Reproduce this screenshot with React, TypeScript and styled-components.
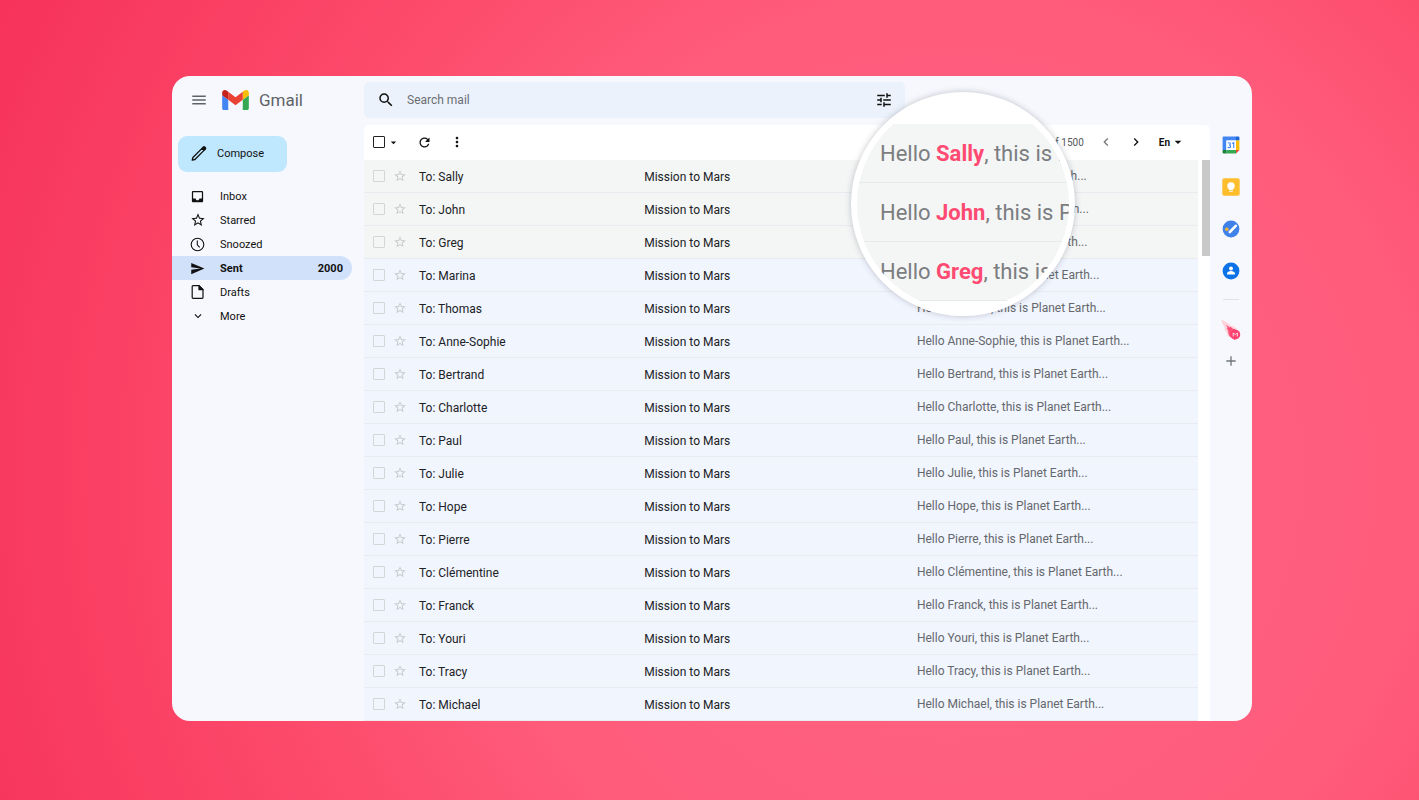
import React from 'react';
import styled, { createGlobalStyle } from 'styled-components';
import {
  MdMenu, MdSearch, MdTune, MdRefresh, MdMoreVert, MdInbox, MdStarBorder, MdSend,
  MdExpandMore, MdChevronLeft, MdChevronRight, MdAdd, MdArrowDropDown,
} from 'react-icons/md';

const GlobalStyle = createGlobalStyle`
  *, *::before, *::after { box-sizing: border-box; }
  body { margin: 0; font-family: Roboto, "Liberation Sans", sans-serif; font-size: 12px; color: #202124; }
  button, input, select { font: inherit; color: inherit; margin: 0; }
  button { border: 0; padding: 0; background: none; cursor: pointer; display: inline-flex; align-items: center; justify-content: center; }
  svg { display: block; flex: none; }
`;

const Stage = styled.div`
  min-height: 100vh;
  padding: 76px 167px 79px 172px;
  background: radial-gradient(ellipse 75% 133% at 67% 59%, #ff6584 0%, #ff5b7b 45%, #fd4d6d 62%, #fb4366 76%, #f6325a 100%);
`;

const Window = styled.div`
  position: relative;
  display: grid;
  grid-template-columns: 192px minmax(0, 1fr) 42px;
  grid-template-rows: 49px auto;
  background: #f7f8fd;
  border-radius: 18px;
  overflow: hidden;
`;

const Brand = styled.header`
  display: flex;
  align-items: center;
  padding: 0 0 2px 18px;
  color: #5f6368;
`;

const MenuButton = styled.button`
  width: 18px;
  height: 18px;
`;

const BrandLink = styled.a`
  display: flex;
  align-items: center;
  gap: 10px;
  margin-left: 14px;
  color: #5f6368;
  font-size: 17px;
  text-decoration: none;
`;

const SearchBar = styled.form`
  display: flex;
  align-items: center;
  align-self: start;
  width: 64%;
  height: 36px;
  margin-top: 6px;
  padding: 0 13px;
  gap: 12px;
  border-radius: 5px;
  background: #ebf2fb;
  color: #111;
`;

const SearchInput = styled.input`
  flex: 1;
  min-width: 0;
  border: 0;
  padding: 0;
  outline: 0;
  background: transparent;
  font-size: 12px;
  &::placeholder { color: #6b6f74; opacity: 1; }
`;

const Sidebar = styled.aside`
  grid-row: 2;
  grid-column: 1;
  padding-top: 11px;
`;

const Compose = styled.button`
  width: 109px;
  height: 36px;
  margin: 0 0 12px 6px;
  justify-content: flex-start;
  padding: 0 0 2px 13px;
  gap: 10px;
  border-radius: 9px;
  background: #bfe7fd;
  color: #111;
  font-size: 11px;
`;

const NavLink = styled.a<{ $active?: boolean }>`
  display: flex;
  align-items: center;
  height: 24px;
  margin-right: 12px;
  padding: 0 9px 0 18px;
  gap: 15px;
  border-radius: 0 12px 12px 0;
  background: ${p => (p.$active ? '#d2e1fa' : 'transparent')};
  font-size: 11px;
  font-weight: ${p => (p.$active ? 700 : 400)};
  color: #111;
  text-decoration: none;
`;

const IconSlot = styled.span`
  display: flex;
  justify-content: center;
  width: 15px;
`;

const Count = styled.span`
  margin-left: auto;
`;

const Panel = styled.main`
  grid-row: 2;
  grid-column: 2;
  background: #fff;
  border-radius: 5px 5px 0 0;
`;

const Toolbar = styled.div`
  display: flex;
  align-items: center;
  height: 35px;
  padding: 0 24px 1px 9px;
`;

const CheckBox = styled.input<{ $strong?: boolean }>`
  appearance: none;
  display: block;
  width: 12px;
  height: 12px;
  border: 1px solid ${p => (p.$strong ? '#222' : '#d3d5d6')};
  border-radius: 1px;
`;

const ToolButton = styled.button<{ $gap?: number; $dim?: boolean }>`
  width: 16px;
  height: 16px;
  margin-left: ${p => p.$gap ?? 0}px;
  color: ${p => (p.$dim ? '#777' : '#111')};
`;

const Range = styled.span`
  margin-left: auto;
  font-size: 10px;
  color: #55585c;
`;

const Language = styled.button`
  margin-left: 15px;
  font-size: 10px;
  font-weight: 700;
  color: #111;
`;

const Scroller = styled.div`
  display: grid;
  grid-template-columns: minmax(0, 1fr) 8px;
  gap: 4px;
  align-items: start;
`;

const ScrollThumb = styled.div`
  height: 96px;
  background: #c9c9c9;
`;

const MailTable = styled.table`
  width: 100%;
  table-layout: fixed;
  border-collapse: separate;
  border-spacing: 0;
`;

const MailRow = styled.tr<{ $sent?: boolean }>`
  background: ${p => (p.$sent ? '#f4f6f6' : '#f1f5fe')};
`;

const Cell = styled.td`
  height: 33px;
  padding: 2px 0 0;
  border-bottom: 1px solid #e8ebef;
  white-space: nowrap;
`;

const PreviewCell = styled(Cell)`
  padding: 0;
  color: #65686c;
`;

const CheckCell = styled(Cell)`
  padding: 0 0 0 9px;
`;

const StarCell = styled(Cell)`
  padding: 0;
`;

const StarButton = styled.button`
  display: flex;
  width: 14px;
  height: 14px;
  margin-left: -1px;
  color: #c8cacc;
`;

const Rail = styled.aside`
  grid-row: 2;
  grid-column: 3;
  display: flex;
  flex-direction: column;
  align-items: center;
  padding-top: 11px;
`;

const AppButton = styled.button`
  width: 18px;
  height: 18px;
  margin-bottom: 24px;
`;

const RailDivider = styled.hr`
  width: 16px;
  margin: -5px 0 19px;
  border: 0;
  border-top: 1px solid #dfe1e5;
`;

const RailSmall = styled.button`
  height: 22px;
  margin-bottom: 9px;
  color: #70757a;
`;

const Lens = styled.div`
  position: absolute;
  top: 16px;
  right: 177px;
  width: 224px;
  height: 224px;
  padding-top: 26px;
  border: 6px solid #fff;
  border-radius: 50%;
  overflow: hidden;
  background: #fff;
  box-shadow: 0 0 6px rgba(60, 64, 80, 0.3);
`;

const LensRow = styled.p`
  height: 59px;
  margin: 0;
  padding-left: 23px;
  border-bottom: 1px solid #e8ebeb;
  background: #f4f6f6;
  color: #7b7d80;
  font-size: 22px;
  line-height: 59px;
  white-space: nowrap;
`;

const Highlight = styled.strong`
  color: #ff4a72;
`;

const GmailLogo = () => (
  <svg width="27" height="20" viewBox="52 42 88 66" aria-hidden="true">
    <path fill="#4285f4" d="M58 108h14V74L52 59v43c0 3.32 2.69 6 6 6" />
    <path fill="#34a853" d="M120 108h14c3.32 0 6-2.69 6-6V59l-20 15" />
    <path fill="#fbbc04" d="M120 48v26l20-15v-8c0-7.42-8.47-11.65-14.4-7.2" />
    <path fill="#ea4335" d="M72 74V48l24 18 24-18v26L96 92" />
    <path fill="#c5221f" d="M52 51v8l20 15V48l-5.6-4.2c-5.94-4.45-14.4-.22-14.4 7.2" />
  </svg>
);

const Pencil = () => (
  <svg width="16" height="16" viewBox="0 0 16 16" fill="none" stroke="#111" strokeWidth="1.3" strokeLinejoin="round" aria-hidden="true">
    <path d="M1.200 15.200l.7-2.700L11 3.400l2 2-9.100 9.100z" />
    <path d="M11.400 3l1-1c.4-.4.8-.4 1.200 0l.8.8c.4.4.4.8 0 1.200l-1 1z" fill="#111" />
  </svg>
);

const Clock = () => (
  <svg width="15" height="15" viewBox="0 0 15 15" fill="none" stroke="#111" strokeWidth="1.1" aria-hidden="true">
    <circle cx="7.5" cy="7.5" r="6.3" />
    <path d="M7.3 3.6v4.200l2.400 2.600" />
  </svg>
);

const DraftPage = () => (
  <svg width="13" height="14" viewBox="0 0 13 14" fill="none" stroke="#111" strokeWidth="1.2" strokeLinejoin="round" aria-hidden="true">
    <path d="M2 .7h6l4 4v7.800c0 .5-.3.8-.8.8H2c-.5 0-.8-.3-.8-.8v-11c0-.5.3-.8.8-.8z" />
    <path d="M8 .7v4h4z" fill="#111" />
  </svg>
);

const Calendar = () => (
  <svg width="18" height="18" viewBox="0 0 18 18" aria-hidden="true">
    <path fill="#4285f4" d="M1.6.6H14v4H4.400v9.400H.6V1.600a1 1 0 0 1 1-1z" />
    <path fill="#1967d2" d="M14 .6h2.400a1 1 0 0 1 1 1v3H14z" />
    <path fill="#fbbc04" d="M14 4.600h3.400V14H14z" />
    <path fill="#34a853" d="M4.400 14H14v3.400H4.400z" />
    <path fill="#188038" d="M.6 14h3.800v3.400H1.600a1 1 0 0 1-1-1z" />
    <path fill="#ea4335" d="M14 14h3.400L14 17.400z" />
    <path fill="#fff" d="M4.400 4.600H14V14H4.400z" />
    <path fill="none" stroke="#4285f4" strokeWidth="1.100" d="M6 7.300c.3-.8 2.400-.9 2.400.6 0 .8-.6 1.200-1.300 1.200.8 0 1.500.5 1.500 1.300 0 1.600-2.500 1.500-2.800.4M10.200 7.500l1.500-.9v5.300" />
  </svg>
);

const Keep = () => (
  <svg width="18" height="18" viewBox="0 0 18 18" aria-hidden="true">
    <rect width="17.400" height="17.400" x=".3" y=".3" rx="1.800" fill="#fdbd2c" />
    <circle cx="9" cy="8" r="3.700" fill="#fff" />
    <path fill="#fff" d="M7.200 10h3.600v2H7.200zM7.200 12.700h3.600v1.100H7.200z" />
  </svg>
);

const Tasks = () => (
  <svg width="18" height="18" viewBox="0 0 18 18" aria-hidden="true">
    <circle cx="9" cy="9" r="8.400" fill="#4081ea" />
    <path d="M7.800 12l6-6.200" stroke="#fff" strokeWidth="2.600" strokeLinecap="round" />
    <circle cx="4.800" cy="9.300" r="1.700" fill="#f9b72b" />
  </svg>
);

const Contacts = () => (
  <svg width="18" height="18" viewBox="0 0 18 18" aria-hidden="true">
    <circle cx="9" cy="9" r="8.400" fill="#0b72e7" />
    <circle cx="9" cy="6.500" r="2" fill="#fff" />
    <path fill="#fff" d="M5 12.600v-1c0-1.600 2-2.500 4-2.500s4 .9 4 2.500v1z" />
  </svg>
);

const Meteor = () => (
  <svg width="20" height="22" viewBox="0 0 20 22" aria-hidden="true">
    <path fill="#ffd3dc" d="M.2.3l8 4.600 1.400 1.900 2.600.2 3.600 2.800 3.400 3.200-5.600 7.600-6.800-3.600-1-3.800-2.200-2.200.2-2.600-2.200-3.400z" />
    <path fill="#ff4f77" d="M5 5.800l3.900 2.800.3-1 3 2.400 1-.2 5.400 4.200-5 7-5-3.800-1.400-3.200.2-2-1.800-3 1.200.2z" />
    <circle cx="14.300" cy="15.600" r="4.900" fill="#fb4270" />
    <path d="M12.200 17.400v-3.400l2.100 1.600 2.100-1.600v3.400" stroke="#ffd7e0" fill="none" />
  </svg>
);

const folders = [
  { label: 'Inbox', icon: <MdInbox size={15} /> },
  { label: 'Starred', icon: <MdStarBorder size={16} /> },
  { label: 'Snoozed', icon: <Clock /> },
  { label: 'Sent', icon: <MdSend size={15} />, count: 2000 },
  { label: 'Drafts', icon: <DraftPage /> },
  { label: 'More', icon: <MdExpandMore size={14} /> },
];

const recipients = [
  'Sally', 'John', 'Greg', 'Marina', 'Thomas', 'Anne-Sophie', 'Bertrand', 'Charlotte', 'Paul',
  'Julie', 'Hope', 'Pierre', 'Clémentine', 'Franck', 'Youri', 'Tracy', 'Michael',
];

const apps = [
  { label: 'Calendar', icon: <Calendar /> },
  { label: 'Keep', icon: <Keep /> },
  { label: 'Tasks', icon: <Tasks /> },
  { label: 'Contacts', icon: <Contacts /> },
];

export default function App() {
  return (
    <>
      <GlobalStyle />
      <Stage>
        <Window>
          <Brand>
            <MenuButton aria-label="Main menu"><MdMenu size={18} /></MenuButton>
            <BrandLink href="#"><GmailLogo />Gmail</BrandLink>
          </Brand>
          <SearchBar role="search">
            <MdSearch size={18} />
            <SearchInput type="text" aria-label="Search mail" placeholder="Search mail" />
            <ToolButton type="button" aria-label="Search options"><MdTune size={18} /></ToolButton>
          </SearchBar>

          <Sidebar>
            <Compose><Pencil />Compose</Compose>
            <nav>
              {folders.map(f => (
                <NavLink key={f.label} href="#" $active={f.label === 'Sent'}>
                  <IconSlot>{f.icon}</IconSlot>
                  {f.label}
                  {f.count && <Count>{f.count}</Count>}
                </NavLink>
              ))}
            </nav>
          </Sidebar>

          <Panel>
            <Toolbar>
              <CheckBox type="checkbox" aria-label="Select all" $strong />
              <ToolButton aria-label="Select menu"><MdArrowDropDown size={13} /></ToolButton>
              <ToolButton aria-label="Refresh" $gap={15}><MdRefresh size={15} /></ToolButton>
              <ToolButton aria-label="More options" $gap={17}><MdMoreVert size={16} /></ToolButton>
              <Range>1-50 of 1500</Range>
              <ToolButton aria-label="Newer" $gap={14} $dim><MdChevronLeft size={16} /></ToolButton>
              <ToolButton aria-label="Older" $gap={14}><MdChevronRight size={16} /></ToolButton>
              <Language>En<MdArrowDropDown size={16} /></Language>
            </Toolbar>
            <Scroller>
              <MailTable>
                <colgroup>
                  <col style={{ width: 30 }} />
                  <col style={{ width: 25 }} />
                  <col style={{ width: '27%' }} />
                  <col style={{ width: '32.7%' }} />
                  <col />
                </colgroup>
                <tbody>
                  {recipients.map((name, i) => (
                    <MailRow key={name} $sent={i < 3}>
                      <CheckCell><CheckBox type="checkbox" aria-label={`Select ${name}`} /></CheckCell>
                      <StarCell><StarButton aria-label={`Star ${name}`}><MdStarBorder size={14} /></StarButton></StarCell>
                      <Cell>To: {name}</Cell>
                      <Cell>Mission to Mars</Cell>
                      <PreviewCell>Hello {name}, this is Planet Earth...</PreviewCell>
                    </MailRow>
                  ))}
                </tbody>
              </MailTable>
              <ScrollThumb />
            </Scroller>
          </Panel>

          <Rail>
            {apps.map(a => <AppButton key={a.label} aria-label={a.label}>{a.icon}</AppButton>)}
            <RailDivider />
            <RailSmall aria-label="Mail merge"><Meteor /></RailSmall>
            <RailSmall aria-label="Get add-ons"><MdAdd size={16} /></RailSmall>
          </Rail>

          <Lens>
            {recipients.slice(0, 3).map(name => (
              <LensRow key={name}>Hello <Highlight>{name}</Highlight>, this is Planet Earth...</LensRow>
            ))}
          </Lens>
        </Window>
      </Stage>
    </>
  );
}
